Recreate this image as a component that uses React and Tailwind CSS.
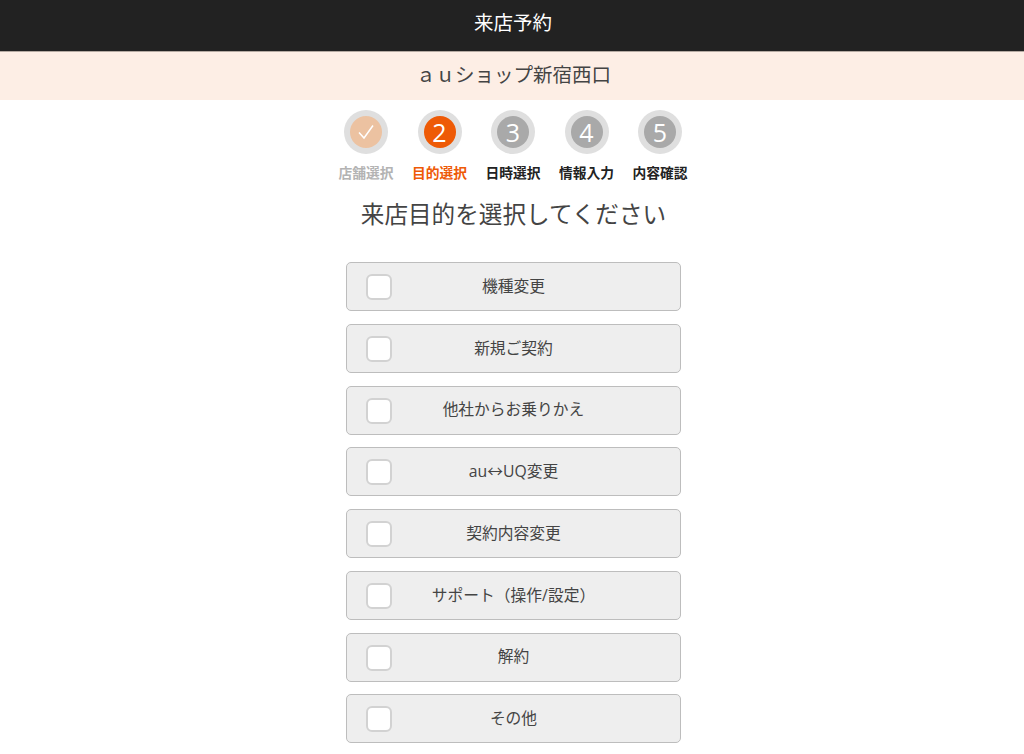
import React from 'react';

const steps = [
  { no: '✓', label: '店舗選択', state: 'done' },
  { no: '2', label: '目的選択', state: 'current' },
  { no: '3', label: '日時選択', state: 'todo' },
  { no: '4', label: '情報入力', state: 'todo' },
  { no: '5', label: '内容確認', state: 'todo' },
];

const purposes = [
  '機種変更',
  '新規ご契約',
  '他社からお乗りかえ',
  'au↔UQ変更',
  '契約内容変更',
  'サポート（操作/設定）',
  '解約',
  'その他',
];

const Step = ({ no, label, state }) => {
  const inner = state === 'done' ? 'bg-[#ecc2a1]' : state === 'current' ? 'bg-[#ee5a06]' : 'bg-[#a9a9a9]';
  const text = state === 'done' ? 'text-[#b3b3b3]' : state === 'current' ? 'text-[#ee5a06]' : 'text-[#222222]';
  return (
    <div className="flex w-[73.5px] flex-col items-center">
      <div className="flex h-[44px] w-[44px] items-center justify-center rounded-full bg-[#dfdfdf]">
        <div className={`flex h-[32px] w-[32px] items-center justify-center rounded-full text-[25px] leading-none text-white ${inner}`}>
          {state === 'done' ? (
            <svg width="18" height="16" viewBox="0 0 18 16" fill="none" stroke="white" strokeWidth="1.5">
              <path d="M2 8.5 L7 14 L16 1.5" />
            </svg>
          ) : (
            no
          )}
        </div>
      </div>
      <div className={`mt-[10px] whitespace-nowrap text-[13.75px] leading-[18px] font-bold ${text}`}>{label}</div>
    </div>
  );
};

const PurposeRow = ({ label }) => (
  <label className="relative flex h-[49px] w-[335px] items-center justify-center rounded-[5px] border border-[#bdbdbd] bg-[#eeeeee] text-[15.75px] text-[#444444]">
    <span className="absolute top-[11px] left-[19px] h-[26px] w-[26px] rounded-[6px] border-2 border-[#d2d2d2] bg-white" />
    <span>{label}</span>
  </label>
);

export default function App() {
  return (
    <div className="h-[754px] overflow-hidden bg-white font-['Open_Sans','Noto_Sans_CJK_JP',sans-serif]">
      <header className="flex h-[52px] items-center justify-center border-b border-[#b5aaa2] bg-[#222222] pb-[5px] pl-[2px] text-[19.5px] text-white">
        来店予約
      </header>
      <div className="flex h-[48px] items-center justify-center bg-[#fdeee5] pb-[2px] pl-[3px] text-[19.5px] text-[#444444]">
        ａｕショップ新宿西口
      </div>
      <div className="mt-[10px] flex justify-center pl-[2px]">
        {steps.map((s) => (
          <Step key={s.label} {...s} />
        ))}
      </div>
      <h1 className="mt-[14px] pl-[3px] text-center text-[23.6px] leading-[36px] font-normal text-[#444444]">
        来店目的を選択してください
      </h1>
      <div className="mt-[30.4px] flex flex-col items-center gap-[12.7px] pl-[3px]">
        {purposes.map((p) => (
          <PurposeRow key={p} label={p} />
        ))}
      </div>
    </div>
  );
}
